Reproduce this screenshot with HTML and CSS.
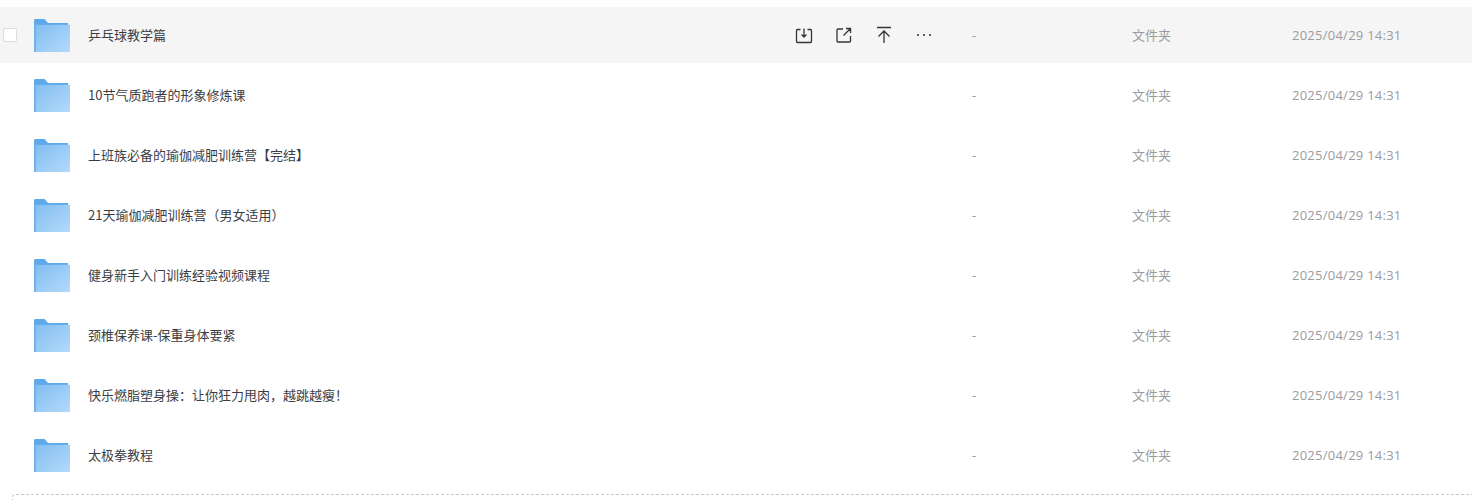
FILE: index.html
```html
<!DOCTYPE html>
<html lang="zh">
<head>
<meta charset="utf-8">
<title>文件列表</title>
<link rel="stylesheet" href="styles.css">
</head>
<body>
<svg class="defs" width="0" height="0" aria-hidden="true">
  <defs>
    <linearGradient id="fg" x1="0" y1="0" x2="1" y2="1">
      <stop offset="0" stop-color="#82bdf0"/>
      <stop offset="1" stop-color="#b3dafb"/>
    </linearGradient>
    <symbol id="folder" viewBox="0 0 36 34" preserveAspectRatio="none">
      <path d="M0 1.500C0 .7.7 0 1.500 0H10.500L14 4H34V9H2V33.500H0.500Z" fill="#5ea9e8"/>
      <rect x="1" y="6" width="35" height="28" fill="url(#fg)"/>
      <rect x="0" y="6" width="2" height="28" fill="#6fb2ec"/>
      <rect x="27" y="12" width="6" height="1" fill="#a0ccf2"/>
      <rect x="27" y="14" width="6" height="1" fill="#a0ccf2"/>
    </symbol>
  </defs>
</svg>
<main class="list">
  <div class="row row-hover">
    <span class="check"></span>
    <svg class="folder"><use href="#folder"/></svg>
    <span class="name">乒乓球教学篇</span>
    <div class="actions">
      <svg class="act" viewBox="0 0 18 18"><path d="M5.500 3.500H2.500a1 1 0 0 0-1 1V15.500a1 1 0 0 0 1 1H15.500a1 1 0 0 0 1-1V4.500a1 1 0 0 0-1-1H12.500M9 2.500V10.500M6.500 8.500 9 11 11.500 8.500" /></svg>
      <svg class="act" viewBox="0 0 18 18"><path d="M8 3H3a1 1 0 0 0-1 1V15a1 1 0 0 0 1 1H14.500a1 1 0 0 0 1-1V10M8.500 9.500 15 3M11 2.500H15.500V7"/></svg>
      <svg class="act" viewBox="0 0 18 18"><path d="M2 1.500H16M9 17V5M3.500 10.500 9 5 14.500 10.500"/></svg>
      <svg class="act" viewBox="0 0 18 18"><circle class="dot" cx="3" cy="9" r="1"/><circle class="dot" cx="9" cy="9" r="1"/><circle class="dot" cx="15" cy="9" r="1"/></svg>
    </div>
    <span class="size">-</span><span class="type">文件夹</span><span class="date">2025/04/29 14:31</span>
  </div>
  <div class="row"><span class="check-space"></span><svg class="folder"><use href="#folder"/></svg><span class="name">10节气质跑者的形象修炼课</span><span class="size">-</span><span class="type">文件夹</span><span class="date">2025/04/29 14:31</span></div>
  <div class="row"><span class="check-space"></span><svg class="folder"><use href="#folder"/></svg><span class="name">上班族必备的瑜伽减肥训练营【完结】</span><span class="size">-</span><span class="type">文件夹</span><span class="date">2025/04/29 14:31</span></div>
  <div class="row"><span class="check-space"></span><svg class="folder"><use href="#folder"/></svg><span class="name">21天瑜伽减肥训练营（男女适用）</span><span class="size">-</span><span class="type">文件夹</span><span class="date">2025/04/29 14:31</span></div>
  <div class="row"><span class="check-space"></span><svg class="folder"><use href="#folder"/></svg><span class="name">健身新手入门训练经验视频课程</span><span class="size">-</span><span class="type">文件夹</span><span class="date">2025/04/29 14:31</span></div>
  <div class="row"><span class="check-space"></span><svg class="folder"><use href="#folder"/></svg><span class="name">颈椎保养课-保重身体要紧</span><span class="size">-</span><span class="type">文件夹</span><span class="date">2025/04/29 14:31</span></div>
  <div class="row"><span class="check-space"></span><svg class="folder"><use href="#folder"/></svg><span class="name">快乐燃脂塑身操：让你狂力甩肉，越跳越瘦！</span><span class="size">-</span><span class="type">文件夹</span><span class="date">2025/04/29 14:31</span></div>
  <div class="row"><span class="check-space"></span><svg class="folder"><use href="#folder"/></svg><span class="name">太极拳教程</span><span class="size">-</span><span class="type">文件夹</span><span class="date">2025/04/29 14:31</span></div>
</main>
<div class="dropzone"></div>
</body>
</html>
```
FILE: styles.css
```css
* { box-sizing: border-box; }
html, body { margin: 0; height: 500px; overflow: hidden; background: #fff; }
body {
  padding-top: 7px;
  font-family: "Open Sans", "Noto Sans CJK SC", sans-serif;
  font-size: 13px;
}
.defs { display: block; height: 0; }
.list { display: flex; flex-direction: column; gap: 4px; }
.row { display: flex; align-items: center; height: 56px; }
.row-hover { background: #f5f5f5; }
.check, .check-space { flex: none; width: 14px; height: 14px; margin-left: 3px; }
.check { background: #fff; border: 1px solid #dcdcdc; border-radius: 2px; }
.folder { flex: none; width: 36px; height: 33px; margin: 1px 0 0 17px; }
.name { flex: none; width: 0; margin-left: 18px; padding-bottom: 2px; white-space: nowrap; color: #3c3d44; font-family: "Noto Sans CJK SC", sans-serif; }
.actions { position: absolute; left: 795px; display: flex; gap: 22px; }
.act { width: 18px; height: 18px; fill: none; stroke: #33343a; stroke-width: 1.300; }
.act .dot { fill: #33343a; stroke: none; }
.size { flex: none; width: 0; margin-left: 884px; color: #9a9ba1; }
.type { flex: none; width: 160px; margin-left: 160px; padding-bottom: 2px; color: #9a9ba1; font-family: "Noto Sans CJK SC", sans-serif; }
.date { flex: none; color: #9a9ba1; letter-spacing: .25px; }
.dropzone { height: 6px; margin: 11px 0 0 12px; border: 1px dashed #c8c8c8; border-bottom: 0; border-right: 0; border-radius: 4px 0 0 0; }
```
